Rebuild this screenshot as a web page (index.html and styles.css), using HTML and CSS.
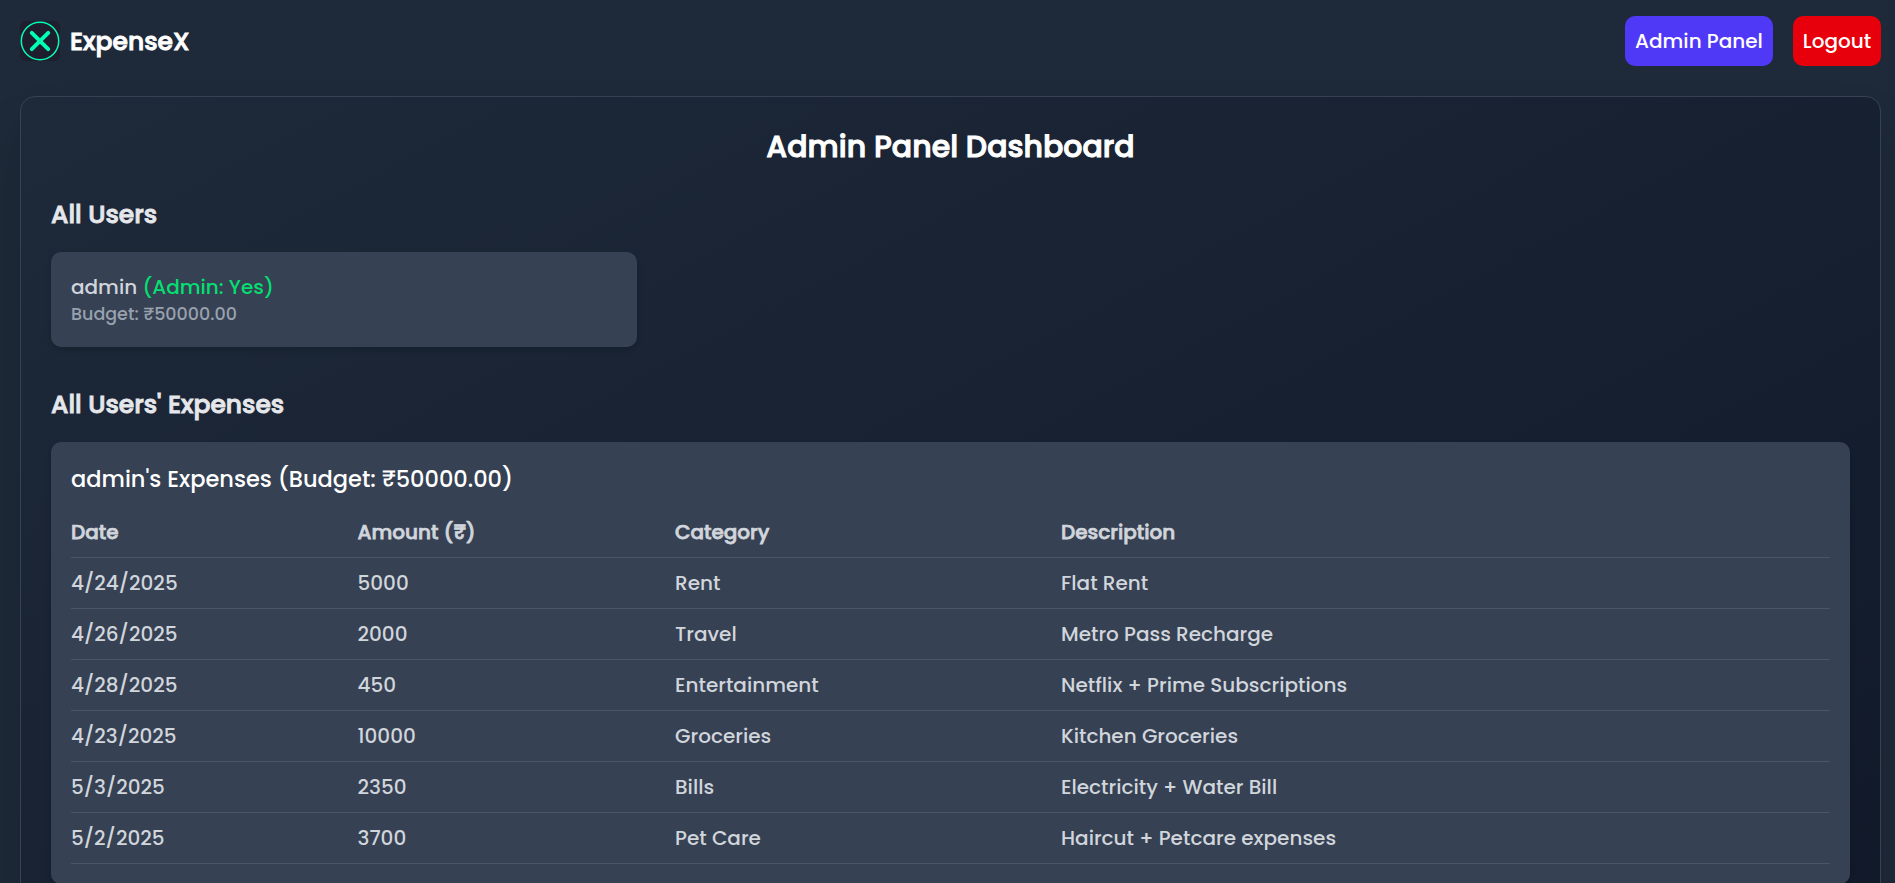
FILE: index.html
```html
<!DOCTYPE html>
<html lang="en">
<head>
<meta charset="utf-8">
<title>ExpenseX</title>
<link rel="stylesheet" href="styles.css">
</head>
<body>
<header class="navbar">
  <div class="brand">
    <svg class="logo" viewBox="0 0 40 40" fill="none">
      <rect width="40" height="40" rx="6" fill="#1e1e2f"/>
      <circle cx="20" cy="20" r="18.7" stroke="#00ffb3" stroke-width="1.5"/>
      <path d="M11.8 11.8 28.2 28.2M28.2 11.8 11.8 28.2" stroke="#00ffb3" stroke-width="4" stroke-linecap="round"/>
    </svg>
    <span class="brand-name">ExpenseX</span>
  </div>
  <nav class="actions">
    <button class="btn btn-admin"><span>Admin Panel</span></button>
    <button class="btn btn-logout"><span>Logout</span></button>
  </nav>
</header>
<main class="panel">
  <h1 class="title"><span>Admin Panel Dashboard</span></h1>
  <h2 class="section-title">All Users</h2>
  <div class="users">
    <div class="user-card">
      <p class="user-name"><span class="name">admin</span> <span class="role">(Admin: Yes)</span></p>
      <p class="user-budget">Budget: ₹50000.00</p>
    </div>
  </div>
  <h2 class="section-title">All Users' Expenses</h2>
  <section class="expenses">
    <h3 class="expenses-owner">admin's Expenses (Budget: ₹50000.00)</h3>
    <table class="table">
      <colgroup><col class="c-date"><col class="c-amount"><col class="c-category"><col></colgroup>
      <thead><tr><th>Date</th><th>Amount (₹)</th><th>Category</th><th>Description</th></tr></thead>
      <tbody>
        <tr><td>4/24/2025</td><td>5000</td><td>Rent</td><td>Flat Rent</td></tr>
        <tr><td>4/26/2025</td><td>2000</td><td>Travel</td><td>Metro Pass Recharge</td></tr>
        <tr><td>4/28/2025</td><td>450</td><td>Entertainment</td><td>Netflix + Prime Subscriptions</td></tr>
        <tr><td>4/23/2025</td><td>10000</td><td>Groceries</td><td>Kitchen Groceries</td></tr>
        <tr><td>5/3/2025</td><td>2350</td><td>Bills</td><td>Electricity + Water Bill</td></tr>
        <tr><td>5/2/2025</td><td>3700</td><td>Pet Care</td><td>Haircut + Petcare expenses</td></tr>
      </tbody>
    </table>
  </section>
</main>
</body>
</html>
```
FILE: styles.css
```css
* { box-sizing: border-box; margin: 0; padding: 0; }
html { font-size: 20px; }
body {
  height: 883px;
  overflow: hidden;
  background: #1e2939;
  color: #d1d5dc;
  font-family: Poppins, Inter, "Noto Sans", sans-serif;
  font-weight: 500;
  line-height: 1.5;
}
.navbar {
  display: flex;
  justify-content: space-between;
  align-items: center;
  height: 82px;
  padding: 0 14px 0 20px;
}
.brand { display: flex; align-items: center; gap: 10px; }
.logo { display: block; width: 40px; height: 40px; }
.brand-name {
  color: #fff;
  font-size: 25px;
  line-height: 35px;
  -webkit-text-stroke: 0.9px currentColor;
}
.actions { display: flex; gap: 20px; }
.btn {
  height: 50px;
  border: 0;
  border-radius: 10px;
  color: #fff;
  font: inherit;
  white-space: nowrap;
}
.btn-admin { width: 148px; background: #4f39f6; }
.btn-logout { width: 88px; background: #e7000b; }
.panel {
  margin: 14px 14px 0 20px;
  min-height: 1000px;
  padding: 30px;
  border: 1px solid #364153;
  border-radius: 15px;
  background: linear-gradient(to bottom right in oklab, #1e2939, #101828);
  box-shadow: 0 25px 50px -12px rgba(0, 0, 0, 0.25);
}
.title {
  margin-bottom: 30px;
  color: #fff;
  font-size: 30px;
  font-weight: 500;
  line-height: 40px;
  text-align: center;
  -webkit-text-stroke: 1px currentColor;
}
.section-title {
  margin-bottom: 20px;
  color: #e5e7eb;
  font-size: 25px;
  font-weight: 500;
  line-height: 35px;
  -webkit-text-stroke: 0.9px currentColor;
}
.users {
  display: grid;
  grid-template-columns: repeat(3, 1fr);
  gap: 20px;
  margin-bottom: 40px;
}
.user-card,
.expenses {
  padding: 20px;
  border-radius: 10px;
  background: #364153;
  box-shadow: 0 4px 6px -1px rgba(0, 0, 0, 0.1), 0 2px 4px -2px rgba(0, 0, 0, 0.1);
}
.role { color: #05df72; }
.user-budget { color: #99a1af; font-size: 17.5px; line-height: 25px; }
.expenses-owner {
  margin-bottom: 10px;
  color: #fff;
  font-size: 22.5px;
  font-weight: 500;
  line-height: 35px;
}
.table { width: 100%; table-layout: fixed; border-collapse: collapse; text-align: left; }
.c-date { width: 286.5px; }
.c-amount { width: 317.5px; }
.c-category { width: 386px; }
.table tr { height: 51px; border-bottom: 1px solid #4a5565; }
.table thead tr { height: 50px; }
.table th { font-weight: 500; -webkit-text-stroke: 0.75px currentColor; }
```
